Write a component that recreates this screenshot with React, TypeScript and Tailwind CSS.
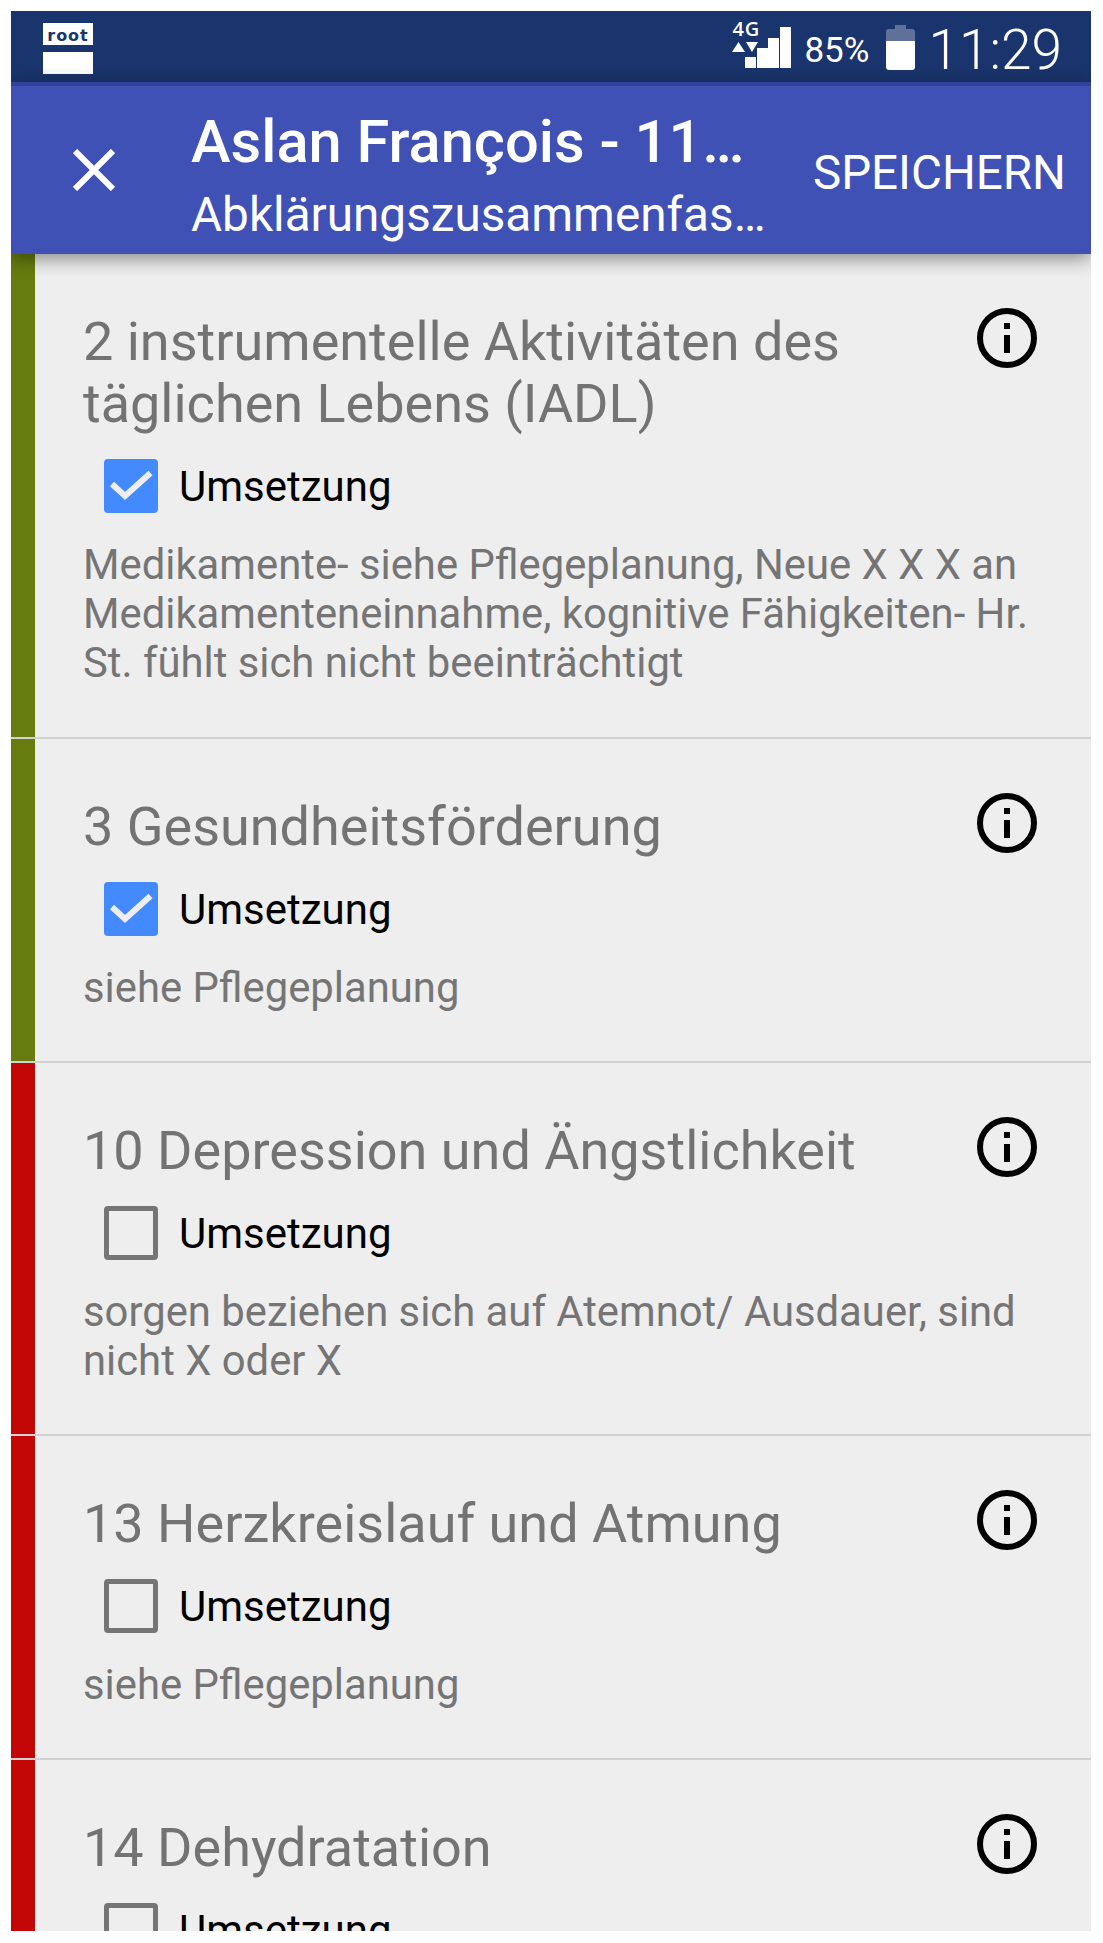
const font = { fontFamily: "Roboto, sans-serif" };

function InfoIcon() {
  return (
    <svg width="60" height="60" viewBox="0 0 60 60" className="shrink-0">
      <circle cx="30" cy="30" r="27" fill="none" stroke="#000" strokeWidth="6" />
      <rect x="27" y="15" width="6" height="6" fill="#000" />
      <rect x="27" y="27" width="6" height="18" fill="#000" />
    </svg>
  );
}

function Checkbox({ checked }: { checked: boolean }) {
  if (checked) {
    return (
      <div className="w-[54px] h-[54px] rounded-[4px] bg-[#448aff] shrink-0 flex items-center justify-center">
        <svg width="54" height="54" viewBox="0 0 54 54">
          <path d="M8 25 L21 37 L46.5 14" fill="none" stroke="#eeeeee" strokeWidth="6" />
        </svg>
      </div>
    );
  }
  return <div className="w-[54px] h-[54px] rounded-[4px] border-[5px] border-[#757575] shrink-0" />;
}

type Item = { title: string[]; checked: boolean; desc: string[]; color: string };

function Row({ title, checked, desc, color, pb }: Item & { pb: string }) {
  return (
    <div className="flex border-b-2 border-[#d2d2d2] shrink-0">
      <div className={color + " w-[24px] shrink-0"} />
      <div className={"flex-1 pt-[57px] pl-[48px] pr-[54px] " + pb}>
        <div className="flex justify-between items-start">
          <div className="text-[54px] leading-[62px] text-[#737373]">
            {title.map((t) => (
              <div key={t}>{t}</div>
            ))}
          </div>
          <div className="-mt-[3px]">
            <InfoIcon />
          </div>
        </div>
        <div className="flex items-center gap-[21px] pl-[21px] mt-[24px] h-[54px]">
          <Checkbox checked={checked} />
          <span className="text-[42px] leading-[54px] pt-[2px] text-black">Umsetzung</span>
        </div>
        {desc.length > 0 && (
          <div className="mt-[27px] text-[41.8px] leading-[49px] text-[#757575]">
            {desc.map((t) => (
              <div key={t}>{t}</div>
            ))}
          </div>
        )}
      </div>
    </div>
  );
}

export default function App() {
  return (
    <div className="h-[1943px] bg-white pt-[11px] pl-[11px] pr-[12px] pb-[12px]" style={font}>
      <div className="h-full flex flex-col overflow-hidden bg-[#eeeeee]">
        <div className="h-[71px] shrink-0 bg-[#1a356d] flex items-start justify-between pl-[32px] pr-[29px] text-white">
          <div className="pt-[12px] flex flex-col gap-[7px]">
            <div className="w-[50px] h-[22px] bg-white text-[#1a356d] text-[16px] leading-[26px] font-bold text-center tracking-[1px]" style={{ fontFamily: "'DejaVu Sans', sans-serif" }}>
              root
            </div>
            <div className="w-[50px] h-[22px] bg-white" />
          </div>
          <div className="flex items-start">
            <div className="relative w-[60px] h-[47px] mt-[10px]">
              <span className="absolute left-0 -top-[2px] text-[20px] leading-[20px] font-semibold tracking-[1px]" style={{ fontFamily: "'Open Sans', sans-serif" }}>4G</span>
              <svg width="60" height="47" viewBox="0 0 60 47" className="absolute left-0 top-0">
                <path d="M0 31 L6.5 21 L13 31 Z M14 21 L26 21 L20 31 Z" fill="#fff" />
                <rect x="13" y="36" width="11" height="11" fill="#fff" />
                <rect x="25" y="27" width="11" height="20" fill="#fff" />
                <rect x="36" y="17" width="11" height="30" fill="#fff" />
                <rect x="48" y="6" width="11" height="41" fill="#fff" />
              </svg>
            </div>
            <span className="ml-[12px] mt-[22px] text-[35px] leading-[35px]">85%</span>
            <svg width="29" height="45" viewBox="0 0 29 45" className="ml-[17px] mt-[14px]">
              <path d="M9 0 H20 V4 H26 Q29 4 29 7 V16 H0 V7 Q0 4 3 4 H9 Z" fill="#5f7099" />
              <path d="M0 16 H29 V42 Q29 45 26 45 H3 Q0 45 0 42 Z" fill="#fff" />
            </svg>
            <span className="ml-[13px] mt-[17px] text-[55px] leading-[44px] font-light">11:29</span>
          </div>
        </div>
        <div className="h-[172px] shrink-0 bg-[#3f51b5] border-t-4 border-[#3240a0] flex items-center relative z-10 shadow-[0_4px_18px_rgba(0,0,0,0.45)] text-white">
          <div className="w-[180px] shrink-0 pl-[62px]">
            <svg width="42" height="42" viewBox="0 0 42 42">
              <path d="M2 2 L40 40 M40 2 L2 40" stroke="#fff" strokeWidth="6" fill="none" />
            </svg>
          </div>
          <div className="flex-1 min-w-0 pt-[11px]">
            <div className="text-[59.6px] leading-[70px] font-medium whitespace-nowrap">Aslan François - 11…</div>
            <div className="text-[47.7px] leading-[60px] mt-[8px] whitespace-nowrap">Abklärungszusammenfas…</div>
          </div>
          <div className="pr-[25px] pt-[5px] text-[47.5px] leading-[60px]">SPEICHERN</div>
        </div>
        <Row pb="pb-[50px]" color="bg-[#667c0e]" checked title={["2 instrumentelle Aktivitäten des", "täglichen Lebens (IADL)"]} desc={["Medikamente- siehe Pflegeplanung, Neue X X X an", "Medikamenteneinnahme, kognitive Fähigkeiten- Hr.", "St. fühlt sich nicht beeinträchtigt"]} />
        <Row pb="pb-[49px]" color="bg-[#667c0e]" checked title={["3 Gesundheitsförderung"]} desc={["siehe Pflegeplanung"]} />
        <Row pb="pb-[49px]" color="bg-[#c30707]" checked={false} title={["10 Depression und Ängstlichkeit"]} desc={["sorgen beziehen sich auf Atemnot/ Ausdauer, sind", "nicht X oder X"]} />
        <Row pb="pb-[49px]" color="bg-[#c30707]" checked={false} title={["13 Herzkreislauf und Atmung"]} desc={["siehe Pflegeplanung"]} />
        <Row pb="pb-[49px]" color="bg-[#c30707]" checked={false} title={["14 Dehydratation"]} desc={[]} />
      </div>
    </div>
  );
}
